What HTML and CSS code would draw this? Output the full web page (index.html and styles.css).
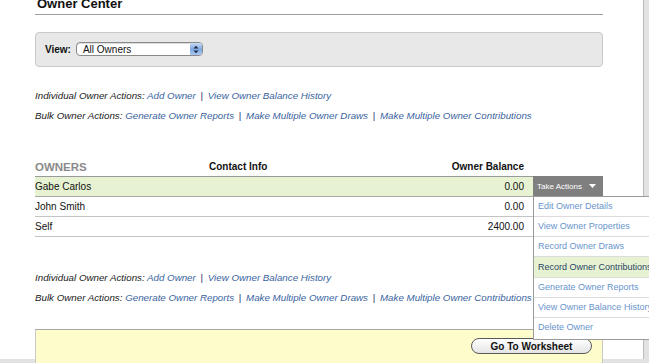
FILE: index.html
```html
<!DOCTYPE html>
<html lang="en">
<head>
    <meta charset="UTF-8">
    <meta name="viewport" content="width=device-width, initial-scale=1.0">
    <title>Owner Center</title>
    <link rel="stylesheet" href="styles.css">
</head>
<body>
<div class="page">
    <div class="content">
        <h1 class="title">Owner Center</h1>

        <div class="filter">
            <span class="filter-label">View:</span>
            <div class="select">
                <span class="select-text">All Owners</span>
                <span class="stepper">
                    <svg width="6" height="9" viewBox="0 0 6 9">
                        <path d="M0.5 3.5 L3 0.8 L5.5 3.5 Z M0.5 5.5 L3 8.2 L5.5 5.5 Z" fill="#1c2a44"/>
                    </svg>
                </span>
            </div>
        </div>

        <div class="actions">
            <p>Individual Owner Actions: <a href="#">Add Owner</a> <span class="sep">|</span> <a href="#">View Owner Balance History</a></p>
            <p>Bulk Owner Actions: <a href="#">Generate Owner Reports</a> <span class="sep">|</span> <a href="#">Make Multiple Owner Draws</a> <span class="sep">|</span> <a href="#">Make Multiple Owner Contributions</a></p>
        </div>

        <table class="owners">
            <thead>
            <tr>
                <th class="col-name">OWNERS</th>
                <th class="col-contact">Contact Info</th>
                <th class="col-balance">Owner Balance</th>
                <th class="col-action"></th>
            </tr>
            </thead>
            <tbody>
            <tr class="selected">
                <td>Gabe Carlos</td>
                <td></td>
                <td class="balance">0.00</td>
                <td class="action">
                    <div class="take-actions">
                        Take Actions
                        <svg width="7" height="4" viewBox="0 0 7 4"><path d="M0 0 L7 0 L3.5 4 Z" fill="#ffffff"/></svg>
                        <ul class="menu">
                            <li><a href="#">Edit Owner Details</a></li>
                            <li><a href="#">View Owner Properties</a></li>
                            <li><a href="#">Record Owner Draws</a></li>
                            <li class="hover"><a href="#">Record Owner Contributions</a></li>
                            <li><a href="#">Generate Owner Reports</a></li>
                            <li><a href="#">View Owner Balance History</a></li>
                            <li><a href="#">Delete Owner</a></li>
                        </ul>
                    </div>
                </td>
            </tr>
            <tr>
                <td>John Smith</td>
                <td></td>
                <td class="balance">0.00</td>
                <td class="action"></td>
            </tr>
            <tr>
                <td>Self</td>
                <td></td>
                <td class="balance">2400.00</td>
                <td class="action"></td>
            </tr>
            </tbody>
        </table>

        <div class="actions actions-bottom">
            <p>Individual Owner Actions: <a href="#">Add Owner</a> <span class="sep">|</span> <a href="#">View Owner Balance History</a></p>
            <p>Bulk Owner Actions: <a href="#">Generate Owner Reports</a> <span class="sep">|</span> <a href="#">Make Multiple Owner Draws</a> <span class="sep">|</span> <a href="#">Make Multiple Owner Contributions</a></p>
        </div>

        <div class="footer-box">
            <button class="worksheet">Go To Worksheet</button>
        </div>
    </div>
</div>
</body>
</html>
```

FILE: styles.css
```css
html, body {
    margin: 0;
    padding: 0;
    height: 100%;
    overflow: hidden;
}

body {
    font-family: "Liberation Sans", Arial, sans-serif;
    background-color: #e2e2e2;
    color: #111;
}

.page {
    width: 643px;
    height: 100%;
    background-color: #ffffff;
    border-right: 1px solid #bcbcbc;
}

.content {
    width: 568px;
    margin-left: 35px;
}

.title {
    margin: -4px 0 0 0;
    padding: 0 0 3px 2px;
    font-size: 13px;
    line-height: 15px;
    font-weight: bold;
    border-bottom: 1px solid #a0a0a0;
}

/* View filter */
.filter {
    margin-top: 17px;
    height: 33px;
    display: flex;
    align-items: center;
    background-color: #e8e8e8;
    border: 1px solid #c9c9c9;
    border-radius: 4px;
    padding-left: 9px;
}

.filter-label {
    font-size: 10px;
    font-weight: bold;
    margin-right: 5px;
}

.select {
    width: 125px;
    height: 12px;
    display: flex;
    align-items: center;
    justify-content: space-between;
    background-color: #ffffff;
    border: 1px solid #8a8a8a;
    border-radius: 4px;
    box-shadow: inset 0 1px 1px rgba(0, 0, 0, 0.15);
    margin-top: -1px;
}

.select-text {
    font-size: 10px;
    padding-left: 6px;
}

.stepper {
    width: 12px;
    height: 12px;
    display: flex;
    align-items: center;
    justify-content: center;
    border-radius: 0 3px 3px 0;
    background: linear-gradient(#c9dcf5, #7fa8e0 50%, #a9c8f0);
}

/* Action links */
.actions {
    margin-top: 19px;
}

.actions p {
    margin: 0;
    font-size: 9.75px;
    line-height: 20px;
    font-style: italic;
    color: #1a1a1a;
    white-space: nowrap;
}

.actions a {
    color: #3a64a0;
    text-decoration: none;
}

.sep {
    color: #2a2a6a;
    font-style: normal;
    padding: 0 2px;
}

.actions-bottom {
    margin-top: 31px;
}

/* Owners table */
.owners {
    width: 568px;
    margin-top: 31px;
    border-collapse: separate;
    border-spacing: 0;
    font-size: 10px;
}

.owners th {
    height: 19px;
    padding: 0;
    font-weight: bold;
    border-bottom: 1px solid #9a9a9a;
    vertical-align: middle;
}

.owners th.col-name {
    width: 174px;
    text-align: left;
    font-size: 11.5px;
    color: #8a8a8a;
}

.owners th.col-contact {
    text-align: left;
}

.owners th.col-balance {
    width: 140px;
    text-align: right;
    padding-right: 9px;
}

.owners th.col-action {
    width: 70px;
    border-bottom: none;
}

.owners td {
    height: 19px;
    padding: 0;
    border-bottom: 1px solid #c4c4c4;
}

.owners tr.selected td {
    background-color: #e6f2d2;
    border-bottom-color: #a8a8a8;
}

.owners td.balance {
    text-align: right;
    padding-right: 9px;
}

.owners td.action,
.owners tr.selected td.action {
    border-bottom: none;
    background-color: transparent;
    vertical-align: top;
}

.take-actions {
    position: relative;
    height: 20px;
    margin-top: -1px;
    display: flex;
    align-items: center;
    gap: 7px;
    padding-left: 4px;
    background-color: #7f7f7f;
    color: #ffffff;
    font-size: 8px;
}

/* Dropdown menu */
.menu {
    position: absolute;
    top: 20px;
    left: 0;
    width: 124px;
    margin: 0;
    padding: 0;
    list-style: none;
    background-color: #ffffff;
    border: 1px solid #9a9a9a;
    border-top: none;
    z-index: 10;
}

.menu li {
    height: 19px;
    line-height: 19px;
    padding-left: 4px;
    border-top: 1px solid #dcdcdc;
    font-size: 9px;
    white-space: nowrap;
}

.menu li:first-child {
    border-top-color: #9a9a9a;
}

.menu li:last-child {
    height: 21px;
}

.menu a {
    color: #6894cc;
    text-decoration: none;
}

.menu li.hover {
    height: 20px;
    line-height: 20px;
    background-color: #e6f2d2;
}

.menu li.hover a {
    color: #2c4466;
}

/* Bottom box */
.footer-box {
    margin-top: 21px;
    height: 60px;
    display: flex;
    justify-content: flex-end;
    align-items: flex-start;
    padding: 8px 10px 0 0;
    background-color: #fffccc;
    border-top: 1px solid #a8a8a8;
    border-left: 1px solid #c8c8c8;
    border-right: 1px solid #c8c8c8;
}

.worksheet {
    width: 121px;
    height: 16px;
    padding: 0;
    font-family: "Liberation Sans", Arial, sans-serif;
    font-size: 10px;
    font-weight: bold;
    color: #111;
    background: linear-gradient(#ffffff, #e4e4e4);
    border: 1px solid #5a5a5a;
    border-radius: 8px;
    cursor: pointer;
}
```
